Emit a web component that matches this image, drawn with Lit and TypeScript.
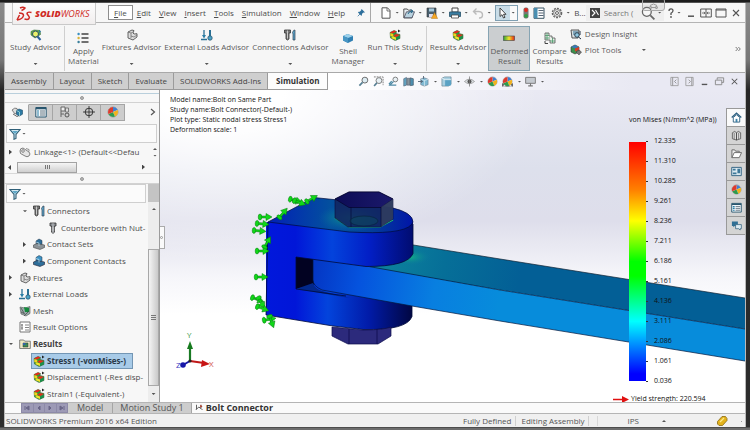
import { LitElement, html, svg, css, TemplateResult, SVGTemplateResult, nothing } from "lit";
import { customElement, property } from "lit/decorators.js";
import { classMap } from "lit/directives/class-map.js";

/* 12 x 12 glyphs */
const stressCube = svg`
  <path d="M1 3.500L5 1.500l2.500 1-.5 2 4 1v4L6 11.500 1.500 9z" fill="#2a9a3c" stroke="#33502a" stroke-width=".5"/>
  <path d="M1 3.500L5 1.500l2.500 1L4 4.500z" fill="#e8281c"/>
  <path d="M1.300 4l3 1v3l-3-1z" fill="#f6d21a"/>
  <path d="M4.300 6.500L7 5l4 1-4 2.200z" fill="#e0301e"/>
  <path d="M4.200 7.500L7 8.400v2.600L2 9z" fill="#f4e12a"/>
  <path d="M7 8.400l4-2v2.500l-4 2.500z" fill="#1c8f4c"/>`;
const screw = svg`<path d="M3 1h6v3H7.500v6L6 11.500 4.500 10V4H3z" fill="#8b8f94" stroke="#333" stroke-width=".8"/><path d="M6 1v10M4.500 6h3M4.500 8h3" stroke="#ddd" stroke-width=".6"/>`;
const funnel = svg`<path d="M1 1.500h10L7 6.500v4l-2 .8V6.500z" fill="#d5e9f2" stroke="#2f5f78" stroke-width="1.100"/><path d="M3 3h6L6 6z" fill="#5da7c6"/>`;
const ball = svg`<circle cx="6" cy="6" r="5" fill="#fff" stroke="#666" stroke-width=".5"/><path d="M6 6V1a5 5 0 0 1 4.600 3z" fill="#3f7fd0"/><path d="M6 6L10.600 4A5 5 0 0 1 8 10.500z" fill="#f2b21e"/><path d="M6 6l2 4.500A5 5 0 0 1 1.500 8z" fill="#2f9a4c"/><path d="M6 6L1.500 8A5 5 0 0 1 6 1z" fill="#dd3b2c"/>`;

const ICONS: Record<string, SVGTemplateResult> = {
  stress: stressCube,
  stressFlag: svg`${stressCube}<path d="M9 .5l2.500 1.500L9 3.500z" fill="#222"/>`,
  advisor: svg`<path d="M1 2.500L4 1l6 .5.5 4L5 9 1 6z" fill="#5fb04a" stroke="#3c6c3a" stroke-width=".6"/><circle cx="5.500" cy="5" r="3" fill="#e9f06a" stroke="#2a4d6b"/><path d="M7.500 7.500l3 3.500" stroke="#2a5f9b" stroke-width="2"/><path d="M9 1l2 1.500L9.500 4z" fill="#2376b8"/>`,
  material: svg`<circle cx="1.600" cy="2" r="1.200" fill="#3a8fc0"/><circle cx="1.600" cy="6" r="1.200" fill="#d8b53b"/><circle cx="1.600" cy="10" r="1.200" fill="#3a7f9c"/><path d="M4.500 2h7M4.500 6h7M4.500 10h7" stroke="#444" stroke-width="1.300"/>`,
  fixture: svg`<path d="M2 3l4-2 2 .6L7 4l1 1 3-.3V8L7 11 2 9z" fill="#dcdcdc" stroke="#555" stroke-width=".9"/><path d="M2 3l3 1v5M5 4l2-1M5 7l3 1 3-2" fill="none" stroke="#666" stroke-width=".7"/>`,
  loads: svg`<path d="M3 1v6M0 10.500h6" stroke="#2a6f94" stroke-width="1.300"/><path d="M1 6h4L3 9.500z" fill="#2a7ea6"/><path d="M9 1v6" stroke="#2a6f94" stroke-width="2"/><circle cx="9" cy="9" r="2.200" fill="#4ba3c7" stroke="#2a5470" stroke-width=".8"/>`,
  connect: svg`<path d="M.5 1h6v3H5v6l-1.500 1L2 10V4H.500z" fill="#777" stroke="#333" stroke-width=".8"/><path d="M3.500 1.500v8" stroke="#ddd" stroke-width=".8"/><path d="M8.500 3.500q1-3 2.500-2.500v10H9V5z" fill="#5ba4c8" stroke="#345" stroke-width=".7"/>`,
  screw,
  shell: svg`<path d="M1 4l4.500-2L11 4v4.500L6 11 1 8.500z" fill="#2f7fb2"/><path d="M1 4l4.500-2L11 4 6 6z" fill="#9bd0ea"/><path d="M1 4l5 2v5L1 8.500z" fill="#4796c4"/>`,
  deformed: svg`<rect x=".5" y="4" width="11" height="4.500" fill="url(#rb)" stroke="#444" stroke-width=".6"/><defs><linearGradient id="rb"><stop offset="0" stop-color="#2b9f3b"/><stop offset=".5" stop-color="#f1e52a"/><stop offset="1" stop-color="#e3261a"/></linearGradient></defs>`,
  compare: svg`<path d="M1 1h4v3h3v2h3v5H6V8H1z" fill="#e8efe8" stroke="#555" stroke-width=".8"/><path d="M1 3.500h4M3 1v7M6 9h5M8.500 6v5M1 6h5" stroke="#4a9a6a" stroke-width=".8"/><path d="M1 9v2.500h3" stroke="#444" fill="none"/>`,
  insight: svg`<path d="M1 2h8l-1 8H2z" fill="#d9dfe3" stroke="#444" stroke-width=".9"/><path d="M3 4h5M3 6h3" stroke="#2b6e91"/><circle cx="7" cy="7" r="2.300" fill="#8fc7e0" stroke="#234" stroke-width=".9"/><path d="M8.500 9l2.500 2M10 3v4" stroke="#234"/>`,
  plot: svg`<path d="M1 3l4-2 4 2v5l-4 2-4-2z" fill="#3c8f4c" stroke="#333" stroke-width=".6"/><path d="M1 3l4-2 4 2-4 1.500z" fill="#3a78b8"/><path d="M5 4.500L9 3v3L5 7.500z" fill="#d83a28"/><path d="M6 8l3-2 2.500 2L9 11z" fill="#777" stroke="#333" stroke-width=".5"/>`,
  pin: svg`<path d="M6.500 1.500l4 4-1 .7-1-.2-2 2 .2 1.500-1 .8-4.400-4.400.8-1 1.500.2 2-2-.2-1z" fill="#2e6f9c"/><path d="M4 8l-3 3" stroke="#2e6f9c"/>`,
  doc: svg`<path d="M2 .8h5.500L10 3.500v7.700H2z" fill="#fff" stroke="#555"/><path d="M7 1v3h3" fill="none" stroke="#555" stroke-width=".8"/>`,
  open: svg`<path d="M.8 10.800V2h3.500l1 1.200H9V10.800z" fill="#e8eef2" stroke="#555"/><path d="M1 10.800l2.500-6h8l-2.500 6z" fill="#b9d2df" stroke="#445" stroke-width=".8"/><path d="M5 7q1-3 4-3M7.500 2.500L10 4 8 6" stroke="#2b6e91" fill="none"/>`,
  save: svg`<path d="M1 1h9v9H1z" fill="#49606f" stroke="#333" stroke-width=".6"/><path d="M3 1.500h5v3H3z" fill="#a6c9dc"/><path d="M3 7h4v3H3z" fill="#dde"/><path d="M8.500 5.500l3.200 6H5.300z" fill="#f5a623" stroke="#a86a10" stroke-width=".4"/>`,
  print: svg`<path d="M3 1h6v4H3z" fill="#fff" stroke="#444"/><path d="M.5 5h11v4.500H.500z" fill="#3b7ea2" stroke="#24506a" stroke-width=".8"/><path d="M2.500 8h7v3h-7z" fill="#fff" stroke="#444" stroke-width=".8"/>`,
  undo: svg`<path d="M4.500 1.500L1.500 4.500l3 3M2 4.500h5q3.500.3 3.500 3.500T7 11" fill="none" stroke="#bbb" stroke-width="1.400"/>`,
  cursor: svg`<path d="M3 1v8.500l2-1.800L6.500 11l1.500-.7-1.500-3H9z" fill="#fff" stroke="#333" stroke-width=".9"/>`,
  light: svg`<rect x="3.500" y=".5" width="5" height="11" rx="2" fill="#777"/><circle cx="6" cy="3" r="1.900" fill="#e0281e"/><circle cx="6" cy="8.800" r="1.900" fill="#2ea043"/>`,
  list: svg`<path d="M1 1h10v10.300H1z" fill="#fff" stroke="#3a5564"/><path d="M1 1h3.500v10.300H1z" fill="#4a8fb1"/><path d="M5.500 3.500h5M5.500 6h5M5.500 8.500h5" stroke="#456" stroke-width=".9"/>`,
  gear: svg`<circle cx="6" cy="6" r="4.600" fill="none" stroke="#666" stroke-width="1.400" stroke-dasharray="2 1"/><circle cx="6" cy="6" r="3.400" fill="#f2f2f2" stroke="#666" stroke-width=".8"/><circle cx="6" cy="6" r="1.500" fill="none" stroke="#666"/>`,
  prompt: svg`<path d="M1 1h10v10H1z" fill="#444"/><path d="M3 3l3 3-3 3M6.500 3l3 5" fill="none" stroke="#fff" stroke-width="1.100"/>`,
  search: svg`<circle cx="5" cy="5" r="3.800" fill="#f7f7f7" stroke="#666" stroke-width="1.100"/><path d="M8 8l3.500 3.500" stroke="#666" stroke-width="1.500"/>`,
  help: svg`<path d="M4 4q0-2.200 2-2.200T8 3.800Q8 5 6 6.200V8" fill="none" stroke="#555" stroke-width="1.300"/><circle cx="6" cy="10" r=".9" fill="#555"/>`,
  min: svg`<path d="M3 9.200h6" stroke="#555" stroke-width="1.500"/>`,
  tile: svg`<path d="M.7 2h10.600v8H.700zM6 2v8" fill="none" stroke="#555"/><path d="M2 6h3M7 6h3M4 4.800L5 6 4 7.200M8 4.800L7 6l1 1.200" fill="none" stroke="#555" stroke-width=".8"/>`,
  max: svg`<path d="M1 2h10v8H1z" fill="none" stroke="#555"/><path d="M1 3h10" stroke="#555"/>`,
  close: svg`<path d="M3 3l6 6M9 3l-6 6" stroke="#555" stroke-width="1.100"/>`,
  more: svg`<path d="M2.500 3l3 3-3 3M6.500 3l3 3-3 3" fill="none" stroke="#555" stroke-width="1.200"/>`,
  zoomFit: svg`<circle cx="7.500" cy="4.500" r="3.200" fill="#dcecf3" stroke="#666"/><path d="M5 7L1.500 10.500" stroke="#567f93" stroke-width="1.900"/>`,
  zoomArea: svg`<path d="M1 1h10v9" fill="none" stroke="#777" stroke-dasharray="2 1"/><circle cx="6.500" cy="5" r="3.200" fill="#e8f1f5" stroke="#777"/><path d="M4.200 7.500l-3 3.500" stroke="#567f93" stroke-width="1.700"/>`,
  prev: svg`<circle cx="8" cy="3.800" r="2.600" fill="#e8f1f5" stroke="#777"/><path d="M6 6L2 10h7M4 5.500L1 9" fill="none" stroke="#4f8ba5" stroke-width="1.300"/>`,
  section: svg`<path d="M.8 3l3-1.500V10l-3 1z" fill="#64a5c2" stroke="#456" stroke-width=".6"/><path d="M4.500 2.500h3V10h-3z" fill="#8a969c" stroke="#456" stroke-width=".6"/><path d="M8 2l3.300 1v7L8 10.500z" fill="#4d90b0" stroke="#345" stroke-width=".6"/>`,
  view: svg`<path d="M3 3l4-1 4 1.500v6L7 11 3 9.500z" fill="#7eb8d2" stroke="#678" stroke-width=".6"/><path d="M7 5v6M3 3l4 2 4-1.500" stroke="#fff" stroke-width=".6" fill="none"/><path d="M0 6h5M3 4.500L5 6 3 7.500M6 0v3" stroke="#567" fill="none"/>`,
  cube: svg`<path d="M1 2.500L4 1h7v8l-3 2H1z" fill="#a9d0e2" stroke="#5d7e90" stroke-width=".7"/><path d="M4.500 4h6.500v6l-3 1H4.500z" fill="#5aa2c4"/><path d="M1 2.500l3.500 1.500H11" fill="none" stroke="#fff" stroke-width=".7"/>`,
  eye: svg`<path d="M.5 6Q6 .8 11.500 6 6 11 .5 6z" fill="#dde1e3" stroke="#888" stroke-width=".7"/><circle cx="6" cy="6" r="2.200" fill="#555"/><path d="M6 .5v11" stroke="#777" stroke-width=".8"/>`,
  ball,
  scene: svg`<path d="M0 11.500V8h12v3.500z" fill="#666"/>${ball}<path d="M1 11.500l1.500-2L4 11.500zM8 11.500l1.500-2 1.500 2z" fill="#eee"/>`,
  monitor: svg`<path d="M.7 1.500h10.600v6.500H.700z" fill="#c5cad0" stroke="#777"/><path d="M6 8v2.500M3.500 10.800h5" stroke="#777" stroke-width="1.200"/>`,
  paneL: svg`<path d="M2 1.500h8v9H2z" fill="none" stroke="#999" stroke-width=".9"/><path d="M4 1.500v9M8 4L6 6l2 2" fill="none" stroke="#888" stroke-width=".9"/>`,
  paneR: svg`<path d="M2 1.500h8v9H2z" fill="none" stroke="#999" stroke-width=".9"/><path d="M8.500 1.500v9M5 4l2 2-2 2" fill="none" stroke="#888" stroke-width=".9"/>`,
  restore: svg`<path d="M3.500 4V2h7v5h-2M1.500 4.500h7v5h-7z" fill="none" stroke="#888"/>`,
  tree: svg`<path d="M1 4q3-3 5-1.500L7 6 4 8z" fill="#ddd" stroke="#666" stroke-width=".8"/><path d="M2 8l4 2.500 2-1" fill="none" stroke="#666"/><path d="M5.500 4.500L8 3l3.500 1.200v4L8.500 10l-3-1.500z" fill="#2c7aa3" stroke="#1d4c68" stroke-width=".6"/><path d="M5.500 4.500L8.500 6v4" fill="none" stroke="#cfe" stroke-width=".6"/>`,
  props: svg`<path d="M.8 1.500h10.400v9.500H.800z" fill="#f2f8fb" stroke="#29566e"/><path d="M1 2.500h10" stroke="#29566e" stroke-width="1.600"/><path d="M2 5h2M2 7h2M2 9h2" stroke="#2a7ea6" stroke-width="1.200"/><path d="M5 5h5M5 7h5M5 9h5" stroke="#456" stroke-width=".8"/>`,
  config: svg`<path d="M2 1h4v4H2zM2 5v6M2 8h3" fill="#eee" stroke="#666"/><path d="M6.500 2h3v4h-3z" fill="#ddd" stroke="#666" stroke-width=".8"/><circle cx="8" cy="9" r="2" fill="#ccc" stroke="#555"/>`,
  target: svg`<circle cx="6" cy="6" r="3.800" fill="none" stroke="#333"/><path d="M6 0v12M0 6h12" stroke="#333" stroke-width=".9"/>`,
  funnel,
  link: svg`<path d="M1 5q0-3 3-3l6 4q2 2 0 4-2 1.500-4 0L1.500 7.500z" fill="#e6e6e6" stroke="#666" stroke-width=".8"/><circle cx="4" cy="5" r="1.300" fill="#fff" stroke="#666" stroke-width=".8"/><path d="M7 2.500l3 1v2" fill="none" stroke="#777" stroke-width=".8"/>`,
  contact: svg`<path d="M3 3l3-2 3 1.500v4L6 8 3 6.500z" fill="#2f6f9a" stroke="#234" stroke-width=".5"/><path d="M.5 7L4 5.500 11.500 7v2.500L7 11.500.500 9.500z" fill="#8b9297" stroke="#444" stroke-width=".6"/><path d="M3 4l3 1v3" stroke="#b9dcec" fill="none" stroke-width=".7"/>`,
  contactPart: svg`<path d="M3 2.500l3-2 3 1.500v4L6 8 3 6.500z" fill="#3d92c4" stroke="#234" stroke-width=".5"/><path d="M.5 7L4 5.500 11.500 7v2.500L7 11.500.500 9.500z" fill="#2f6f9a" stroke="#223" stroke-width=".6"/><path d="M3 3.500l3 1v3" stroke="#cfe8f4" fill="none" stroke-width=".7"/>`,
  mesh: svg`<path d="M1 2l5 1 5-1.500v7L7 11 2 9z" fill="#9aa" stroke="#555" stroke-width=".6"/><path d="M5 2l5 1v4L6 7z" fill="#138a3c"/><path d="M2 3l3 5M2 7l4 2M5 11l5-5" stroke="#444" stroke-width=".7"/>`,
  options: svg`<path d="M1 1h10v10H1z" fill="#fff" stroke="#777"/><path d="M3 3v6M2 4h2M2 7h2M6 4h4M6 6.500h4M6 9h4" stroke="#666" stroke-width=".8"/>`,
  results: svg`<path d="M.7 10.500V2h4l1 1.200h5.600v7.300z" fill="#efeac4" stroke="#666" stroke-width=".8"/><path d="M4 5h5v4H4z" fill="#3d8a54" stroke="#333" stroke-width=".5"/><path d="M4 5h2.500v2H4z" fill="#3464a8"/>`,
  home: svg`<path d="M.8 6L6 1.200 11.200 6" fill="none" stroke="#2c5f80" stroke-width="1.500"/><path d="M2.500 6v5h7V6L6 3z" fill="#fff" stroke="#2c5f80"/><path d="M5 7.500h2V11H5z" fill="#3d83a8"/>`,
  library: svg`<path d="M1.500 3L4 1.500 6 3v8L1.500 9.500zM6 3l2-1.500L10.500 3v6.500L6 11z" fill="#ddd" stroke="#444" stroke-width=".8"/><path d="M3.500 3v7M8.300 3v7" stroke="#555" stroke-width=".7"/>`,
  folder: svg`<path d="M1 10.500V2h3l1 1.500h4V5" fill="#eee" stroke="#666"/><path d="M1 10.500L3.500 5h8L9 10.500z" fill="#fff" stroke="#666"/>`,
  palette: svg`<path d="M.8 1.500h10.400v9H.800z" fill="#dceaf1" stroke="#2c5f80"/><path d="M2 3h3v2H2zM2 7h4v2H2zM7 3h3v5H7z" fill="#3d7899"/>`,
  chat: svg`<path d="M1 1.500h6.500v5H4L2.500 8V6.500H1z" fill="#2f6f95"/><path d="M5 5h6.300v4.500H10V11L8.500 9.500H5z" fill="#dcebf3" stroke="#2f5f7c" stroke-width=".8"/>`,
  tag: svg`<path d="M1.500 6.500L6 1.500h3.500l1.500 2v2L6.500 10.500H3L1.500 9z" fill="#e2b21c" stroke="#8a6a10" stroke-width=".8"/><path d="M4 7l4-4" stroke="#fbe88a" stroke-width="1.300"/>`,
  study: svg`<path d="M2 1v6l3-3 3 2V1M8 6l2 2M2 7l-1 1" stroke="#444" fill="none" stroke-width="1.100"/><path d="M7 1l3 2-3 2z" fill="#b3341f"/>`,
};

const icon = (name: string, cls = "") =>
  html`<svg class="icon ${cls}" viewBox="0 0 12 12" preserveAspectRatio="xMidYMid slice" aria-hidden="true">${ICONS[name]}</svg>`;

const base = css`
  :host { font-family: "Open Sans", "Noto Sans", sans-serif; font-size: 8px; line-height: 10px; color: #4c4c4c; }
  *, *::before { box-sizing: border-box; }
  button { font: inherit; color: inherit; background: none; border: 0; padding: 0; margin: 0; white-space: nowrap; }
  input { font: inherit; color: inherit; background: none; border: 0; padding: 0; margin: 0; outline: 0; min-width: 0; }
  .icon { width: 12px; height: 12px; display: block; flex: none; }
  .caret { width: 4px; height: 2px; background: #555; clip-path: polygon(0 0, 100% 0, 50% 100%); flex: none; }
`;

/* ---------- Title bar ---------- */
@customElement("title-bar")
export class TitleBar extends LitElement {
  static styles = [base, css`
    :host { display: flex; align-items: center; height: 20px; background: #f7f7f7; border-bottom: 1px solid #b4b4b4; padding-left: 7px; }
    .logo { align-self: flex-start; position: relative; z-index: 1; display: flex; align-items: center; gap: 2px; width: 84px; height: 22px; flex: none; padding-left: 3px; margin-right: 12px; background: linear-gradient(#fdfdfd, #f1eeee); border: 1px solid #c9c9c9; border-top: 0; color: #cf2a25; font: italic 9px/12px "Open Sans", sans-serif; }
    .logo b { font-weight: 800; }
    .logo svg { width: 17px; height: 16px; flex: none; }
    .menu { display: flex; align-items: center; gap: 8px; }
    .menu u { text-decoration-thickness: 1px; text-underline-offset: 1px; }
    .file { height: 15px; padding: 0 5px; border: 1px solid #8e8e8e; background: #fff; margin-right: -4px; }
    .pin { margin: 0 4px 0 4px; }
    .pin .icon { width: 9px; height: 9px; }
    .quick { display: flex; align-items: center; gap: 4px; border-left: 1px solid #a8a8a8; height: 19px; padding-left: 9px; }
    .split { display: flex; align-items: center; gap: 3px; }
    .boxed { border: 1px solid #7f9fb2; height: 16px; width: 23px; gap: 2px; padding-left: 1px; background: linear-gradient(90deg, #c9dde8 14px, #fafafa 14px); }
    .pair { display: flex; gap: 3px; align-items: center; margin-right: 2px; }
    .slim { width: 8px; }
    .search { display: flex; align-items: center; height: 16px; background: #efefef; padding: 0 2px 0 3px; gap: 3px; }
    .search input { width: 34px; }
    .search input::placeholder { color: #777; }
    .search .big { width: 14px; height: 14px; }
    .window { display: flex; align-items: center; justify-content: flex-end; gap: 3px; flex: 1; padding-right: 3px; }
    .window .split { margin-right: 1px; gap: 0; }
  `];
  render() {
    const menu = ["Edit", "View", "Insert", "Tools", "Simulation", "Window", "Help"];
    const split = (n: string, label: string, cls = "") =>
      html`<button class="split ${cls}" aria-label=${label}>${icon(n)}<span class="caret"></span></button>`;
    return html`
      <div class="logo">
        <svg viewBox="0 0 17 16" fill="none" stroke="#cf2a25" stroke-width="1.500" aria-hidden="true">
          <path d="M4 2q3-1.500 5 0-1 1.500-3.500 2.500"/><path d="M1 14q6-1 6.500-4.500Q7.500 7 3 7M3.500 9L1 14"/><path d="M15.500 6.500q-4-1-4.500.8 0 1 1.500 2.500t.5 2.700Q12 14 8.500 13"/>
        </svg><span><b>SOLID</b>WORKS</span>
      </div>
      <nav class="menu">
        <button class="file"><u>F</u>ile</button>
        ${menu.map((m) => html`<button><u>${m[0]}</u>${m.slice(1)}</button>`)}
        <button class="pin" aria-label="Pin menu">${icon("pin")}</button>
      </nav>
      <div class="quick">
        ${split("doc", "New")}${split("open", "Open")}${split("save", "Save")}${split("print", "Print")}${split("undo", "Undo")}
        ${split("cursor", "Select", "boxed")}
        <span class="pair"><button aria-label="Rebuild">${icon("light", "slim")}</button><button aria-label="File properties">${icon("list")}</button></span>
        ${split("gear", "Options")}
        <button>B...</button>
      </div>
      <div class="search">
        ${icon("prompt")}
        <input type="text" placeholder="Search (" aria-label="Search Commands" />
        <button class="split" aria-label="Search">${icon("search", "big")}<span class="caret"></span></button>
      </div>
      <div class="window">
        ${split("help", "Help")}
        <button aria-label="Minimize">${icon("min")}</button>
        <button aria-label="Tile">${icon("tile")}</button>
        <button aria-label="Maximize">${icon("max")}</button>
        <button aria-label="Close">${icon("close")}</button>
      </div>`;
  }
}

/* ---------- Ribbon ---------- */
@customElement("tool-ribbon")
export class ToolRibbon extends LitElement {
  static styles = [base, css`
    :host { display: flex; align-items: stretch; height: 50px; background: #f6f6f6; border-bottom: 1px solid #a9a9a9; padding: 3px 3px 1px 5px; gap: 3px; color: #5c5c5c; }
    .tool { display: flex; flex-direction: column; align-items: center; padding-top: 3px; gap: 1px; }
    .tool .caret { margin-top: auto; margin-bottom: 6px; }
    .two { padding-top: 6px; gap: 2px; white-space: pre; }
    .group { display: flex; gap: 2px; }
    .line { border-left: 1px solid #cfcfcf; padding-left: 3px; }
    .on { background: #cbced0; border: 1px solid #86a4b3; width: 42px; padding-top: 5px; }
    .stack { display: flex; flex-direction: column; gap: 4px; padding-top: 2px; width: 76px; }
    .row { display: flex; align-items: center; gap: 3px; }
    .row .caret { margin-left: auto; }
    .more { margin-left: auto; align-self: center; }
    .more .icon { width: 8px; height: 8px; }
  `];
  private tool(i: string, label: string, cls = "", caret = true): TemplateResult {
    return html`<button class="tool ${cls}">${icon(i)}<span>${label}</span>${caret ? html`<span class="caret"></span>` : nothing}</button>`;
  }
  render() {
    return html`
      ${this.tool("advisor", "Study Advisor")}
      <div class="group line">${this.tool("material", "Apply\nMaterial", "two", false)}</div>
      ${this.tool("fixture", "Fixtures Advisor")}
      ${this.tool("loads", "External Loads Advisor")}
      ${this.tool("connect", "Connections Advisor")}
      ${this.tool("shell", "Shell\nManager", "two", false)}
      ${this.tool("stressFlag", "Run This Study")}
      <div class="group line">
        ${this.tool("stress", "Results Advisor")}
        ${this.tool("deformed", "Deformed\nResult", "two on", false)}
        ${this.tool("compare", "Compare\nResults", "two", false)}
      </div>
      <div class="stack">
        <button class="row">${icon("insight")}<span>Design Insight</span></button>
        <button class="row">${icon("plot")}<span>Plot Tools</span><span class="caret"></span></button>
      </div>
      <button class="more" aria-label="More tools">${icon("more")}</button>`;
  }
}

/* ---------- Command tabs and view toolbar ---------- */
@customElement("command-tabs")
export class CommandTabs extends LitElement {
  static styles = [base, css`
    :host { display: flex; height: 17px; background: linear-gradient(90deg, #fff 45%, #e9e9f3 85%); }
    .tabs { display: flex; }
    .tab { background: #cfcfcf; border-right: 1px solid #9b9b9b; border-bottom: 1px solid #9b9b9b; padding: 0 6px; color: #444; }
    .on { background: #fcfcfc; font-weight: 700; padding: 0 8px; color: #333; }
    .view, .pane { display: flex; align-items: center; gap: 4px; }
    .view { margin: 0 auto 0 30px; }
    .split { display: flex; align-items: center; gap: 4px; }
    .view .icon, .pane .icon { width: 11px; height: 11px; }
    .pane { padding-right: 5px; }
  `];
  render() {
    const tabs = ["Assembly", "Layout", "Sketch", "Evaluate", "SOLIDWORKS Add-Ins", "Simulation"];
    const one = (n: string, l: string) => html`<button aria-label=${l}>${icon(n)}</button>`;
    const drop = (n: string, l: string) => html`<button class="split" aria-label=${l}>${icon(n)}<span class="caret"></span></button>`;
    return html`
      <div class="tabs" role="tablist">
        ${tabs.map((t) => html`<button role="tab" aria-selected=${t === "Simulation"} class=${classMap({ tab: true, on: t === "Simulation" })}>${t}</button>`)}
      </div>
      <div class="view">
        ${one("zoomFit", "Zoom to fit")}${one("zoomArea", "Zoom to area")}${one("prev", "Previous view")}${one("section", "Section view")}
        ${drop("view", "View orientation")}${drop("cube", "Display style")}${drop("eye", "Hide or show items")}
        ${one("ball", "Edit appearance")}${drop("scene", "Apply scene")}${drop("monitor", "View settings")}
      </div>
      <div class="pane">
        ${one("paneL", "Collapse left")}${one("paneR", "Collapse right")}${one("min", "Minimize")}${one("restore", "Restore")}${one("close", "Close")}
      </div>`;
  }
}

/* ---------- Feature and study tree ---------- */
interface Node { icon: string; text: string; level: number; arrow?: "open" | "shut"; on?: boolean; bold?: boolean; }
const NODES: Node[] = [
  { icon: "connect", text: "Connectors", level: 1, arrow: "open" },
  { icon: "screw", text: "Counterbore with Nut-", level: 2 },
  { icon: "contact", text: "Contact Sets", level: 1, arrow: "shut" },
  { icon: "contactPart", text: "Component Contacts", level: 1, arrow: "shut" },
  { icon: "fixture", text: "Fixtures", level: 0, arrow: "shut" },
  { icon: "loads", text: "External Loads", level: 0, arrow: "shut" },
  { icon: "mesh", text: "Mesh", level: 0 },
  { icon: "options", text: "Result Options", level: 0 },
  { icon: "results", text: "Results", level: 0, arrow: "open", bold: true },
  { icon: "stressFlag", text: "Stress1 (-vonMises-)", level: 1, on: true, bold: true },
  { icon: "stressFlag", text: "Displacement1 (-Res disp-", level: 1 },
  { icon: "stressFlag", text: "Strain1 (-Equivalent-)", level: 1 },
];

@customElement("study-panel")
export class StudyPanel extends LitElement {
  static styles = [base, css`
    :host { display: flex; flex-direction: column; width: 155px; flex: none; background: #f7f7f7; border-right: 1px solid #9c9c9c; }
    .handle { height: 10px; display: flex; align-items: center; justify-content: center; flex: none; border-bottom: 1px solid #d2d2d2; }
    .handle::before { content: ""; width: 4px; height: 4px; border-radius: 50%; background: #b5b5b5; border: 1px solid #999; }
    .top { border-top: 1px solid #b9cfdc; margin-top: 3px; }
    .tabs { display: flex; height: 18px; align-items: center; flex: none; margin-bottom: 3px; }
    .tab { width: 24px; height: 17px; display: grid; place-items: center; background: #cdcdcd; border: 1px solid #a5a5a5; border-left: 0; }
    .first { background: #f7f7f7; border-color: transparent #a5a5a5 transparent transparent; }
    .next { margin-left: auto; padding-right: 3px; }
    .next svg { width: 6px; height: 8px; display: block; }
    .filter { display: flex; align-items: center; gap: 1px; height: 19px; margin: 0 2px 0 1px; padding-left: 2px; background: #fbfbfb; border: 1px solid #cfcfcf; flex: none; }
    .filter input { flex: 1; }
    .part { display: flex; align-items: center; height: 18px; gap: 3px; padding: 0 2px 0 4px; flex: none; }
    .part .icon { margin-left: 4px; }
    .part .name { white-space: nowrap; flex: 1; }
    .spin { display: flex; flex-direction: column; gap: 5px; }
    .up { transform: rotate(180deg); }
    .hbar { display: flex; align-items: center; height: 13px; padding: 0 14px 0 3px; border-bottom: 1px solid #d8d8d8; flex: none; }
    .hthumb { width: 60px; height: 11px; margin: 0 auto 0 6px; border: 1px solid #a3a3a3; background: linear-gradient(#f5f5f5, #cfcfcf); display: flex; justify-content: center; align-items: center; gap: 1px; }
    .hthumb i { width: 1px; height: 4px; background: #777; }
    .tri { width: 3px; height: 5px; background: #444; clip-path: polygon(0 0, 100% 50%, 0 100%); flex: none; }
    .back { transform: rotate(180deg); }
    .study { display: flex; flex: 1; min-height: 0; }
    .left { display: flex; flex-direction: column; flex: 1; min-width: 0; }
    .tree { list-style: none; margin: 0; padding: 0 0 0 3px; flex: 1; display: grid; grid-auto-rows: 1fr; }
    .node { display: flex; align-items: center; white-space: nowrap; }
    .twist { width: 9px; flex: none; display: flex; padding-left: 1px; }
    .l1 { padding-left: 14px; }
    .l2 { padding-left: 28px; }
    .pick { display: flex; align-items: center; gap: 2px; height: 16px; padding: 0 2px 0 1px; border: 1px solid transparent; }
    .bold .pick { font-weight: 700; color: #404040; }
    .on .pick { background: #a8cbe8; border-color: #7396b4; color: #2b3a48; padding-right: 6px; }
    .vbar { width: 11px; flex: none; display: flex; flex-direction: column; align-items: center; background: #ededed; }
    .cap { height: 18px; width: 100%; background: #c4c4c4; }
    .vbar .up { margin-top: 6px; }
    .vthumb { margin: 39px 0 auto; height: 137px; width: 100%; border: 1px solid #a8a8a8; background: linear-gradient(90deg, #f4f4f4, #c9c9c9); display: flex; flex-direction: column; gap: 1px; align-items: center; justify-content: center; }
    .vthumb i { width: 5px; height: 1px; background: #777; }
    .down { margin-bottom: 7px; }
  `];
  render() {
    const grip = html`<i></i><i></i><i></i>`;
    const filter = (label: string) => html`<label class="filter">${icon("funnel")}<span class="caret"></span><input type="text" aria-label=${label} /></label>`;
    return html`
      <div class="handle top"></div>
      <div class="tabs" role="tablist">
        ${[["tree", "Feature manager"], ["props", "Properties"], ["config", "Configurations"], ["target", "Dimensions"], ["ball", "Display"]].map(
          ([n, l], i) => html`<button role="tab" aria-label=${l} class="tab ${i ? "" : "first"}">${icon(n)}</button>`)}
        <button class="next" aria-label="Next"><svg viewBox="0 0 6 8"><path d="M1 1l3.500 3L1 7" fill="none" stroke="#555" stroke-width="1.200"/></svg></button>
      </div>
      ${filter("Filter features")}
      <div class="part"><span class="tri"></span>${icon("link")}<span class="name">Linkage&lt;1&gt; (Default&lt;&lt;Defau</span>
        <span class="spin"><span class="caret up"></span><span class="caret"></span></span></div>
      <div class="hbar"><span class="tri back"></span><span class="hthumb">${grip}</span><span class="tri"></span></div>
      <div class="handle"></div>
      <div class="study">
        <div class="left">
          ${filter("Filter study")}
          <ul class="tree">
            ${NODES.map((n) => html`<li class=${classMap({ node: true, ["l" + n.level]: true, on: !!n.on, bold: !!n.bold })}>
              <span class="twist">${n.arrow === "shut" ? html`<span class="tri"></span>` : n.arrow ? html`<span class="caret"></span>` : nothing}</span>
              <button class="pick">${icon(n.icon)}<span>${n.text}</span></button></li>`)}
          </ul>
        </div>
        <div class="vbar"><span class="cap"></span><span class="caret up"></span><span class="vthumb">${grip}</span><span class="caret down"></span></div>
      </div>`;
  }
}

/* ---------- Graphics area ---------- */
const FIXTURES: [number, number, number][] = [
  [297, 201, 15], [301, 203, 20], [313, 198, -30], [284, 212, -50], [267, 217, 0], [264, 224, 5], [261, 231, 5],
  [268, 241, -60], [264, 251, 0], [263, 277, 0], [259, 300, 20], [262, 304, 60], [264, 309, 20], [271, 319, -10], [272, 323, 70],
];
const LEVELS = ["12.335", "11.310", "10.285", "9.261", "8.236", "7.211", "6.186", "5.161", "4.136", "3.111", "2.086", "1.061", "0.036"];

@customElement("graphics-area")
export class GraphicsArea extends LitElement {
  static styles = [base, css`
    :host { display: block; position: relative; flex: 1; min-width: 0; overflow: hidden; font-size: 7px; color: #111;
      background: radial-gradient(ellipse 55% 55% at 10% 0, #fff 20%, transparent), linear-gradient(#e9e9f3, #dde0ec 25%, #dedeeb 42%, #f6f6fa 60%, #fff 72%); }
    .scene { position: absolute; inset: 0; width: 100%; height: 100%; }
    .scene text { font-size: 8px; }
    .info { position: absolute; left: 10px; top: 5px; margin: 0; white-space: pre; }
    .flap { position: absolute; left: -1px; top: 136px; width: 6px; height: 23px; background: #fafafa; border: 1px solid #aaa; border-left: 0; display: grid; place-items: center; }
    .flap::before { content: ""; width: 3px; height: 3px; border-radius: 50%; border: 1px solid #999; }
    .legend { position: absolute; right: 20px; top: 25px; width: 96px; white-space: nowrap; }
    .scale { display: flex; margin-top: 11px; }
    .bar { width: 17px; height: 239px; margin-top: 6px; background: linear-gradient(#f00, #ff8000 20%, #ff0 33%, #0f0 50%, #0f0 56%, #0ff 75%, #00f 97%); }
    .levels { list-style: none; margin: 0; padding: 0; height: 250px; display: flex; flex-direction: column; justify-content: space-between; }
    .levels li { display: flex; align-items: center; gap: 6px; }
    .levels li::before { content: ""; width: 2px; height: 1px; background: #333; }
    .yield { display: flex; align-items: center; gap: 2px; margin: 8px 0 0 -16px; }
    .yield svg { width: 16px; height: 7px; }
    .tasks { position: absolute; right: 0; top: 18px; width: 19px; border: 1px solid #999; border-right: 0; background: #d4d4d4; }
    .task { display: grid; place-items: center; width: 100%; height: 18px; border-bottom: 1px solid #999; }
    .task:first-child { background: #fafafa; }
    .task:last-child { border-bottom: 0; height: 17px; }
    .task .icon { width: 11px; height: 11px; }
  `];
  render() {
    return html`
      <svg class="scene" viewBox="160 90 585 312" preserveAspectRatio="xMidYMid slice" role="img" aria-label="Stress plot of a clevis with a bolted link">
        <defs>
          <linearGradient id="barTop" gradientUnits="userSpaceOnUse" x1="395" y1="250" x2="520" y2="280"><stop offset="0" stop-color="#0b7f9c"/><stop offset=".4" stop-color="#066f98"/><stop offset="1" stop-color="#035f96"/></linearGradient>
          <linearGradient id="barFront" gradientUnits="userSpaceOnUse" x1="313" y1="270" x2="500" y2="300"><stop offset="0" stop-color="#0436c4"/><stop offset=".25" stop-color="#0553de"/><stop offset=".65" stop-color="#087fe0"/><stop offset="1" stop-color="#078cdb"/></linearGradient>
          <linearGradient id="body" gradientUnits="userSpaceOnUse" x1="266" y1="0" x2="413" y2="0"><stop offset="0" stop-color="#0118dc"/><stop offset=".2" stop-color="#0116d8"/><stop offset=".45" stop-color="#0343dc"/><stop offset=".7" stop-color="#021fc6"/><stop offset="1" stop-color="#010c70"/></linearGradient>
          <linearGradient id="lower" gradientUnits="userSpaceOnUse" x1="266" y1="0" x2="413" y2="0"><stop offset="0" stop-color="#0118dc"/><stop offset=".2" stop-color="#0116d8"/><stop offset=".42" stop-color="#0344dc"/><stop offset=".7" stop-color="#011ba8"/><stop offset="1" stop-color="#010640"/></linearGradient>
          <linearGradient id="topFace" gradientUnits="userSpaceOnUse" x1="275" y1="215" x2="413" y2="220"><stop offset="0" stop-color="#0225b4"/><stop offset=".4" stop-color="#03509e"/><stop offset=".7" stop-color="#033f9a"/><stop offset="1" stop-color="#0115a8"/></linearGradient>
          <radialGradient id="hot"><stop offset="0" stop-color="#12b384" stop-opacity=".9"/><stop offset="1" stop-color="#0a6fa0" stop-opacity="0"/></radialGradient>
          <linearGradient id="headTop" x1="0" y1="0" x2="1" y2="0"><stop offset="0" stop-color="#0d0c55"/><stop offset="1" stop-color="#1b196b"/></linearGradient>
        </defs>
        <path d="M370 238L500 259 745 298V329L500 290 370 268z" fill="url(#barTop)"/>
        <path d="M370 238L500 259 745 298" fill="none" stroke="#123" stroke-width=".7"/>
        <ellipse cx="410" cy="257" rx="22" ry="9" fill="url(#hot)"/>
        <path d="M266 222v93l67 11 30 3.500q44 1 49-13V300L330 280 296 257z" fill="url(#lower)"/>
        <path d="M266 315l67 11 30 3.500q44 1 49-13V306" fill="none" stroke="#000a3a" stroke-width=".8"/>
        <path d="M296 256l20 2v26l-20 5z" fill="#020222"/>
        <path d="M296 289l17-6q2 6 9 8l28 7z" fill="#02288c"/>
        <path d="M313 258l57 9 20 3.500L500 290 745 329V361L500 321 412 306 322 290q-9-4-9-10z" fill="url(#barFront)"/>
        <path d="M320 258L366 266 500 290 745 329M745 361L500 321 412 306 322 290q-9-4-9-10v-22" fill="none" stroke="#02163c" stroke-width=".7"/>
        <path d="M267 222v35h29l70 9.500q42 0 47-13V222z" fill="url(#body)"/>
        <path d="M296 289V257l70 9.500q42 0 47-13V224M296 289l50 7" fill="none" stroke="#000a3a" stroke-width=".8"/>
        <path d="M268 222l46-24.500 24 2.500 55 8q20 5 20 14-4 12-52 10.500L349 232z" fill="url(#topFace)" stroke="#000a3a" stroke-width=".7"/>
        <ellipse cx="352" cy="218" rx="34" ry="14" fill="url(#hot)"/>
        <path d="M335 218l14 9h31l13-7" fill="none" stroke="#1fc070" stroke-width="1.200"/>
        <path d="M268 222l-2 93" stroke="#000a3a" stroke-width=".8"/>
        <path d="M335 199l14-7h30l14 7v20l-13 8h-32l-13-9z" fill="#12245f" fill-opacity=".88" stroke="#0a0a3a" stroke-width=".6"/>
        <path d="M335 199l14-7h30l14 7-12 8.500H349z" fill="url(#headTop)" stroke="#05052c" stroke-width=".7"/>
        <path d="M381 207l12-8v20l-12 8z" fill="#33405f" fill-opacity=".8"/>
        <path d="M351 207v20M381 207v20" stroke="#050530" stroke-width=".6"/>
        <ellipse cx="364" cy="221" rx="14" ry="5" fill="#0b4a60" fill-opacity=".5" stroke="#07203a" stroke-width=".6"/>
        <path d="M332 327l31 3q20 0 28-3v9l-13 8h-30l-16-8z" fill="#2c2a7c" stroke="#0c0b4c" stroke-width=".7"/>
        <path d="M349 329v15M377 329v15" stroke="#0c0b4c" stroke-width=".8"/>
        <g fill="#10d818" stroke="#067a10" stroke-width=".5">
          ${FIXTURES.map(([x, y, a]) => svg`<g transform="translate(${x} ${y}) rotate(${a})"><path d="M-7-1h6v-2.500L5 0l-6 3.500V1h-6z"/><ellipse cx="-7" cy="0" rx="1.800" ry="3"/></g>`)}
        </g>
        <path d="M190 361V348" stroke="#1a7a24" stroke-width="2.200"/><path d="M187 349l3-8 3 8z" fill="#167a1e"/>
        <path d="M190 361l14 2" stroke="#c01818" stroke-width="2.200"/><path d="M202 360l8 4-9 3z" fill="#c81414"/>
        <path d="M190 361l-7 4" stroke="#1717a8" stroke-width="2"/><circle cx="183" cy="365" r="2.800" fill="#1717a8"/><circle cx="190" cy="361" r="1.600" fill="#222"/>
        <text x="187" y="338" fill="#3a9a48">Y</text><text x="209" y="367" fill="#d05050">X</text><text x="176" y="368" fill="#3a3ac0">Z</text>
      </svg>
      <p class="info">Model name:Bolt on Same Part
Study name:Bolt Connector(-Default-)
Plot type: Static nodal stress Stress1
Deformation scale: 1</p>
      <button class="flap" aria-label="Collapse panel"></button>
      <div class="legend">
        <div>von Mises (N/mm^2 (MPa))</div>
        <div class="scale"><div class="bar"></div><ul class="levels">${LEVELS.map((l) => html`<li>${l}</li>`)}</ul></div>
        <div class="yield"><svg viewBox="0 0 16 7"><path d="M0 2.700h9V0l7 3.500L9 7V4.300H0z" fill="#e01010"/></svg>Yield strength: 220.594</div>
      </div>
      <div class="tasks">
        ${[["home", "Resources"], ["library", "Design library"], ["folder", "File explorer"], ["palette", "View palette"], ["ball", "Appearances"], ["props", "Custom properties"], ["chat", "Forum"]].map(
          ([n, l]) => html`<button class="task" aria-label=${l}>${icon(n)}</button>`)}
      </div>`;
  }
}

/* ---------- Document tabs and status line ---------- */
@customElement("status-footer")
export class StatusFooter extends LitElement {
  static styles = [base, css`
    :host { display: block; color: #555; }
    .docs { display: flex; height: 12px; background: #fafafa; border-top: 1px solid #b5b5b5; border-bottom: 1px solid #b5b5b5; padding-left: 16px; font-size: 9px; }
    .nav { display: flex; width: 47px; background: #8d8aa8; gap: 1px; padding: 1px; }
    .nav button { flex: 1; background: #9d9ab6; display: grid; place-items: center; }
    .nav svg { width: 6px; height: 6px; }
    .doc { background: #cdcdcd; padding: 0 7px; border-right: 1px solid #a5a5a5; }
    .doc.model { padding: 0 9px; }
    .doc.on { background: #fafafa; border: 0; font-weight: 700; color: #333; display: flex; align-items: center; gap: 2px; padding: 0 3px; }
    .on .icon { width: 9px; height: 9px; }
    .status { display: flex; align-items: center; height: 13px; background: #f0f0f0; padding: 0 1px; }
    .cell { border-right: 1px solid #d0d0d0; padding: 0 3px 0 6px; }
    .cell:first-child { padding-left: 0; border: 0; margin-right: auto; }
    .unit { display: flex; align-items: center; gap: 23px; padding: 0 50px 0 30px; margin-left: 8px; border-left: 1px solid #d8d8d8; }
    .unit .caret { transform: rotate(180deg); }
    .grip { width: 7px; height: 7px; margin-left: 9px; background: radial-gradient(circle, #999 1px, transparent 1px) 0 0 / 3px 3px; clip-path: polygon(100% 0, 100% 100%, 0 100%); }
  `];
  render() {
    const nav = [["First", "M1 1v4M5 1L2 3l3 2z"], ["Back", "M4 1L2 3l2 2z"], ["Forward", "M2 1l2 2-2 2z"], ["Last", "M5 1v4M1 1l3 2-3 2z"]];
    return html`
      <div class="docs">
        <div class="nav">${nav.map(([l, d]) => html`<button aria-label=${l}><svg viewBox="0 0 6 6"><path d=${d} fill="#6a6788" stroke="#6a6788"/></svg></button>`)}</div>
        <button class="doc model">Model</button><button class="doc">Motion Study 1</button>
        <button class="doc on">${icon("study")}Bolt Connector</button>
      </div>
      <div class="status">
        <span class="cell">SOLIDWORKS Premium 2016 x64 Edition</span>
        <span class="cell">Fully Defined</span><span class="cell">Editing Assembly</span>
        <button class="unit">IPS<span class="caret"></span></button>
        <button aria-label="Tags">${icon("tag")}</button><span class="grip"></span>
      </div>`;
  }
}

/* ---------- Application window ---------- */
@customElement("app-root")
export class AppRoot extends LitElement {
  @property({ type: String }) name = "Bolt Connector";
  static styles = [base, css`
    :host { display: flex; position: relative; min-height: 100vh; box-sizing: border-box; padding: 3px 5px;
      background: linear-gradient(#1c1c1c 2px, transparent 3px), linear-gradient(0deg, #6d6d6d 2px, transparent 3px),
        linear-gradient(#8b8b8b, #777 60px, #262626 90px, #2d2d2d); }
    .window { flex: 1; min-width: 0; display: flex; flex-direction: column; border: 1px solid #b9b9b9; border-width: 0 1px; margin: 0 -1px; }
    .work { flex: 1; display: flex; min-height: 312px; }
    .grab { position: absolute; z-index: 2; right: 85px; top: -2px; width: 23px; height: 13px; border: 1px solid #aaa; border-radius: 3px; background: #99999922; }
    .grab svg { display: block; width: 11px; height: 6px; margin: 4px 5px; }
  `];
  render() {
    return html`
      <div class="window">
        <title-bar></title-bar>
        <tool-ribbon></tool-ribbon>
        <command-tabs></command-tabs>
        <main class="work"><study-panel></study-panel><graphics-area></graphics-area></main>
        <status-footer></status-footer>
      </div>
      <div class="grab"><svg viewBox="0 0 11 6"><path d="M2 2.500Q5.500-.5 9 2.500M3 4.500h5M1 4.500L3 3v3zM10 4.500L8 3v3z" fill="none" stroke="#999"/></svg></div>`;
  }
}
